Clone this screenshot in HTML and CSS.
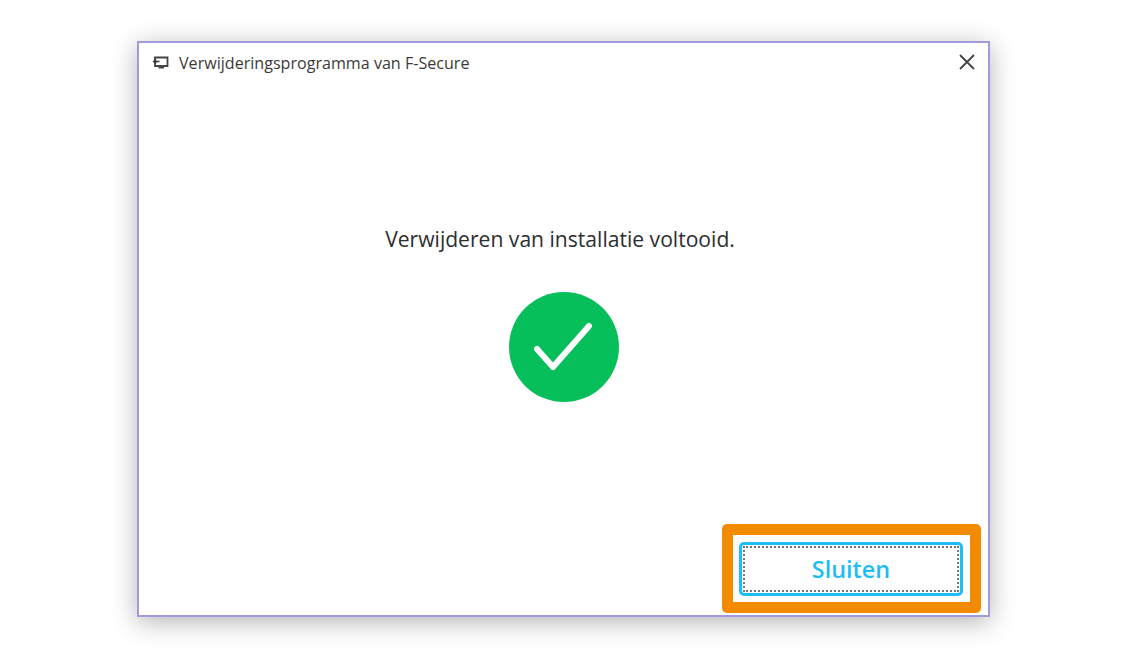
FILE: index.html
```html
<!DOCTYPE html>
<html lang="nl">
<head>
	<meta charset="utf-8">
	<title>Verwijderingsprogramma van F-Secure</title>
	<link rel="stylesheet" href="styles.css">
</head>
<body>

<div class="window">
	<div class="titlebar">
		<svg class="app-icon" width="18" height="18" viewBox="0 0 18 18">
			<path d="M3 3.5h12.5v8.5H3z" fill="none" stroke="#444" stroke-width="1.8"/>
			<path d="M1.5 7.5h6M4 5.5l-2.2 2 2.2 2" fill="none" stroke="#333" stroke-width="1.5"/>
			<path d="M6.5 12h5.5v2.5H6.5z" fill="#444"/>
		</svg>
		<span class="title">Verwijderingsprogramma van F-Secure</span>
		<svg class="close" width="16" height="16" viewBox="0 0 16 16">
			<path d="M1 1l14 14M15 1L1 15" fill="none" stroke="#444" stroke-width="1.8"/>
		</svg>
	</div>

	<div class="content">
		<p class="message">Verwijderen van installatie voltooid.</p>
		<svg class="check" width="110" height="110" viewBox="0 0 110 110">
			<circle cx="55" cy="55" r="55" fill="#06bf5b"/>
			<path d="M28 57l16 18 36-41" fill="none" stroke="#fff" stroke-width="6" stroke-linecap="round" stroke-linejoin="round"/>
		</svg>
	</div>

	<div class="footer">
		<button class="btn" type="button"><span class="btn-inner">Sluiten</span></button>
		<div class="highlight"></div>
	</div>
</div>

</body>
</html>
```

FILE: styles.css
```css
html, body {
	height: 100%;
}
body {
	box-sizing: border-box;
	margin: 0;
	padding: 41px 0 0 137px;
	background: #fff;
	font-family: "Open Sans", "Noto Sans", sans-serif;
}

.window {
	box-sizing: border-box;
	width: 853px;
	height: 576px;
	border: 2px solid #a09bdc;
	background: #fff;
	box-shadow: 0 5px 24px rgba(0, 0, 0, 0.3);
	display: flex;
	flex-direction: column;
}

.titlebar {
	display: flex;
	align-items: center;
	height: 40px;
	padding: 0 13px 0 13px;
}
.app-icon {flex: none;}
.title {
	margin-left: 9px;
	font-size: 16.1px;
	color: #3a3a3a;
}
.close {
	margin-left: auto;
	margin-top: -2px;
}

.content {
	flex: 1;
	display: flex;
	flex-direction: column;
	align-items: center;
}
.message {
	margin: 136px 7px 0 0;
	font-size: 21.1px;
	line-height: 40px;
	color: #2e2e2e;
}
.check {
	margin-top: 33px;
	margin-left: 1px;
}

.footer {
	position: relative;
	display: flex;
	justify-content: flex-end;
	padding: 0 25px 19px 0;
}
.btn {
	box-sizing: border-box;
	width: 224px;
	height: 54px;
	padding: 1px;
	border: 3px solid #1fbdf5;
	border-radius: 5px;
	background: #fff;
	font-family: inherit;
}
.btn-inner {
	box-sizing: border-box;
	display: flex;
	align-items: center;
	justify-content: center;
	height: 100%;
	border: 2px dotted #777;
	font-size: 23.4px;
	font-weight: 600;
	color: #1fbdf5;
}

/* orange marker drawn over the screenshot */
.highlight {
	position: absolute;
	right: 7px;
	bottom: 2px;
	width: 259px;
	height: 89px;
	box-sizing: border-box;
	border: 11px solid #f38b00;
	border-radius: 5px;
}
```
